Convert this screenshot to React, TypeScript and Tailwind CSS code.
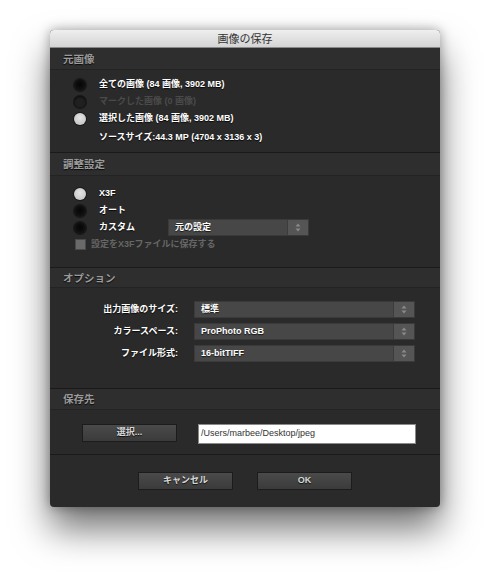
import React from "react";

const FONT = { fontFamily: '"Liberation Sans", "Noto Sans CJK JP", sans-serif' };

function Radio({ kind }: { kind: "on" | "off" | "disabled" }) {
  if (kind === "on")
    return <span className="block w-[12px] h-[12px] rounded-full bg-[radial-gradient(circle_at_50%_40%,#e4e4e4,#bdbdbd)] shadow-[0_0_0_1px_#1a1a1a]" />;
  if (kind === "disabled")
    return <span className="block w-[12px] h-[12px] rounded-full bg-[#202020] shadow-[0_0_0_1px_#161616,inset_0_1px_2px_rgba(0,0,0,0.6)]" />;
  return <span className="block w-[12px] h-[12px] rounded-full bg-[radial-gradient(circle_at_50%_45%,#050505,#1a1a1a)] shadow-[0_0_0_1px_#181818]" />;
}

function Stepper() {
  return (
    <svg width="6" height="9" viewBox="0 0 6 9">
      <path d="M3 0.5 L5.5 3.5 H0.5 Z" fill="#8a8a8a" />
      <path d="M3 8.5 L5.5 5.5 H0.5 Z" fill="#8a8a8a" />
    </svg>
  );
}

function Select({ value, w }: { value: string; w: string }) {
  return (
    <div className={`${w} h-[17px] flex bg-[#474747] border border-[#3a3a3a]`}>
      <div className="flex-1 flex items-center pl-[6px] text-[9px] font-bold text-white [text-shadow:0_1px_1px_rgba(0,0,0,0.7)]">{value}</div>
      <div className="w-[21px] h-full flex items-center justify-center bg-[#555555] border-l border-[#3c3c3c]">
        <Stepper />
      </div>
    </div>
  );
}

function Header({ title, first, h }: { title: string; first?: boolean; h: string }) {
  return (
    <div className={`${h} flex items-center pl-[13px] pt-[2px] bg-[#2e2e2e] border-b border-[#232323] ${first ? "" : "border-t border-t-[#1a1a1a]"}`}>
      <span className="text-[10.5px] font-bold text-[#9a9a9a] [text-shadow:0_1px_1px_rgba(0,0,0,0.8)]">{title}</span>
    </div>
  );
}

function Button({ label }: { label: string }) {
  return (
    <div className="w-[95px] h-[18px] flex items-center justify-center bg-[linear-gradient(#4a4a4a,#3b3b3b)] border border-[#1c1c1c] text-[9px] font-bold text-[#d8d8d8] [text-shadow:0_1px_1px_rgba(0,0,0,0.8)]">
      {label}
    </div>
  );
}

export default function App() {
  const txt = "text-[9px] font-bold text-white [text-shadow:0_1px_1px_rgba(0,0,0,0.8)]";
  return (
    <div className="w-[490px] h-[577px] bg-white flex justify-center pt-[30px]" style={FONT}>
      <div className="w-[390px] h-[477px] flex flex-col rounded-[4px] overflow-hidden bg-[#2a2a2a] shadow-[0_22px_36px_rgba(0,0,0,0.55),0_0_12px_rgba(0,0,0,0.35)]">
        <div className="h-[18px] shrink-0 flex items-center justify-center pt-[1px] bg-[linear-gradient(#efefef,#d4d4d4)] border-b border-[#8a8a8a]">
          <span className="text-[11px] text-[#333]">画像の保存</span>
        </div>

        <Header title="元画像" first h="h-[22px] shrink-0" />
        <div className="h-[82px] shrink-0 pt-[6px] pl-[24px] flex flex-col">
          <div className="h-[17px] flex items-center gap-[13px]">
            <Radio kind="off" />
            <span className={txt}>全ての画像 (84 画像, 3902 MB)</span>
          </div>
          <div className="h-[17px] flex items-center gap-[13px]">
            <Radio kind="disabled" />
            <span className="text-[9px] font-bold text-[#4a4a4a]">マークした画像 (0 画像)</span>
          </div>
          <div className="h-[17px] flex items-center gap-[13px]">
            <Radio kind="on" />
            <span className={txt}>選択した画像 (84 画像, 3902 MB)</span>
          </div>
          <div className="h-[17px] mt-[2px] flex items-center pl-[25px]">
            <span className={txt}>ソースサイズ:44.3 MP (4704 x 3136 x 3)</span>
          </div>
        </div>

        <Header title="調整設定" h="h-[24px] shrink-0" />
        <div className="h-[91px] shrink-0 pt-[9px] pl-[24px] flex flex-col">
          <div className="h-[17px] flex items-center gap-[13px]">
            <Radio kind="on" />
            <span className={txt}>X3F</span>
          </div>
          <div className="h-[17px] flex items-center gap-[13px]">
            <Radio kind="off" />
            <span className={txt}>オート</span>
          </div>
          <div className="h-[17px] flex items-center">
            <Radio kind="off" />
            <span className={`${txt} ml-[13px] w-[69px]`}>カスタム</span>
            <Select value="元の設定" w="w-[141px]" />
          </div>
          <div className="h-[17px] flex items-center gap-[5px] pl-[1px]">
            <span className="block w-[11px] h-[11px] bg-[#6a6a6a] border border-[#4a4a4a]" />
            <span className="text-[9px] font-bold text-[#666]">設定をX3Fファイルに保存する</span>
          </div>
        </div>

        <Header title="オプション" h="h-[21px] shrink-0" />
        <div className="h-[100px] shrink-0 pt-[13px] flex flex-col gap-[5px]">
          {[
            ["出力画像のサイズ:", "標準"],
            ["カラースペース:", "ProPhoto RGB"],
            ["ファイル形式:", "16-bitTIFF"],
          ].map(([l, v]) => (
            <div key={l} className="h-[17px] flex items-center">
              <span className={`${txt} w-[128px] text-right`}>{l}</span>
              <div className="ml-[16px]">
                <Select value={v} w="w-[221px]" />
              </div>
            </div>
          ))}
        </div>

        <Header title="保存先" h="h-[22px] shrink-0" />
        <div className="h-[44px] shrink-0 pt-[14px] flex items-start pl-[32px]">
          <Button label="選択..." />
          <div className="ml-[21px] w-[218px] h-[20px] bg-white border border-[#8a8a8a] flex items-center pl-[2px] text-[9px] text-[#333]">
            /Users/marbee/Desktop/jpeg
          </div>
        </div>

        <div className="flex-1 border-t border-[#1a1a1a] pt-[17px] flex justify-center gap-[24px]">
          <Button label="キャンセル" />
          <Button label="OK" />
        </div>
      </div>
    </div>
  );
}
